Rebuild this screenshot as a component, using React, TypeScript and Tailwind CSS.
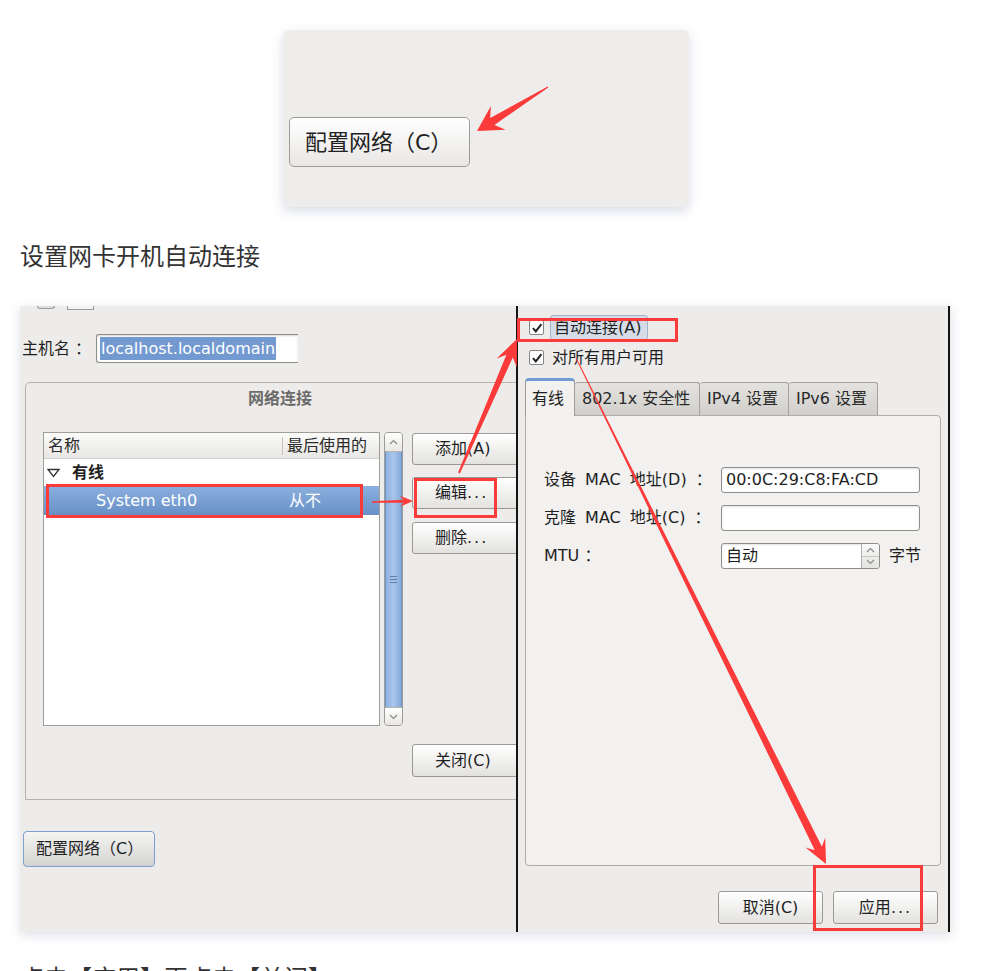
import React from "react";

const dlgFont = "font-['DejaVu_Sans','Noto_Sans_CJK_SC',sans-serif]";
const RED = "#fb3a3a";

// polygon for a snipaste-style arrow: thin tail, widening shaft, swept head
function arrow(x1: number, y1: number, x2: number, y2: number, tailW: number, shaftW: number, headLen: number, headW: number) {
  const dx = x2 - x1;
  const dy = y2 - y1;
  const len = Math.hypot(dx, dy);
  const ux = dx / len;
  const uy = dy / len;
  const nx = -uy;
  const ny = ux;
  const bx = x2 - ux * headLen;
  const by = y2 - uy * headLen;
  const jx = x2 - ux * headLen * 0.72;
  const jy = y2 - uy * headLen * 0.72;
  const pts = [
    [x1 + (nx * tailW) / 2, y1 + (ny * tailW) / 2],
    [jx + (nx * shaftW) / 2, jy + (ny * shaftW) / 2],
    [bx + (nx * headW) / 2, by + (ny * headW) / 2],
    [x2, y2],
    [bx - (nx * headW) / 2, by - (ny * headW) / 2],
    [jx - (nx * shaftW) / 2, jy - (ny * shaftW) / 2],
    [x1 - (nx * tailW) / 2, y1 - (ny * tailW) / 2],
  ];
  return pts.map((p) => p.map((v) => v.toFixed(1)).join(",")).join(" ");
}

function GtkButton({ children, className }: { children: React.ReactNode; className?: string }) {
  return (
    <div
      className={`flex items-center rounded-[3px] border border-[#9a9996] bg-linear-to-b from-[#ffffff] to-[#e3e2df] shadow-[inset_0_1px_0_#ffffff] ${className ?? ""}`}
    >
      {children}
    </div>
  );
}

function Dots() {
  return <span className="tracking-[2px]">...</span>;
}

function Check() {
  return (
    <div className="flex h-[15px] w-[15px] shrink-0 items-center justify-center rounded-[2px] border border-[#858481] bg-white">
      <svg width="12" height="12" viewBox="0 0 12 12">
        <path d="M2 6.2 L4.8 9.4 L10.4 2.2" fill="none" stroke="#222" strokeWidth="2" />
      </svg>
    </div>
  );
}

function Chevron({ up }: { up?: boolean }) {
  return (
    <svg width="9" height="6" viewBox="0 0 9 6">
      <path d={up ? "M1 5 L4.5 1.5 L8 5" : "M1 1 L4.5 4.5 L8 1"} fill="none" stroke="#8a8a8a" strokeWidth="1.2" />
    </svg>
  );
}

function LeftPanel() {
  return (
    <div className={`relative h-full w-[496px] shrink-0 overflow-hidden bg-[#edecea] ${dlgFont} text-[16px] text-[#1f1f1f]`}>
      {/* cut-off window controls */}
      <div className="flex h-[4px] items-start gap-[12px] pl-[17px]">
        <div className="h-[3px] w-[18px] rounded-b-[3px] border border-t-0 border-[#9a9a9a] bg-[#dedddb]" />
        <div className="h-[4px] w-[27px] border border-t-0 border-[#9a9a9a] bg-[#f3f3f2]" />
      </div>

      <div className="mt-[24px] flex h-[29px] items-center">
        <span className="w-[76px] pl-[2px]">主机名 ：</span>
        <div className="flex h-[29px] w-[202px] items-center rounded-l-[3px] border border-r-0 border-[#8e8d8a] bg-white pl-[3px] shadow-[inset_0_1px_2px_rgba(0,0,0,0.15)]">
          <span className="bg-[#7399d1] px-px leading-[23px] text-white">localhost.localdomain</span>
        </div>
      </div>

      {/* frame 网络连接 */}
      <div className="mt-[19px] ml-[5px] h-[418px] w-[510px] rounded-tl-[5px] border border-[#b3b2ae]">
        <div className="h-[49px] pt-[5px] text-center font-bold leading-[22px] text-[#6b6b6b]">网络连接</div>
        <div className="flex pl-[17px]">
          <div className="h-[294px] w-[337px] shrink-0 border border-[#9f9e9b] bg-white">
            <div className="flex h-[26px] items-center border-b border-[#cfcecb] bg-linear-to-b from-[#fbfbfa] to-[#e8e7e4] text-[#2a2a2a]">
              <span className="w-[238px] pl-[4px]">名称</span>
              <span className="h-[18px] w-px bg-[#c3c2be]" />
              <span className="pl-[4px]">最后使用的</span>
            </div>
            <div className="flex h-[27px] items-center pl-[3px]">
              <svg width="13" height="10" viewBox="0 0 13 10">
                <path d="M1 1.5 L12 1.5 L6.5 8.5 Z" fill="none" stroke="#333" strokeWidth="1.3" />
              </svg>
              <span className="ml-[12px] font-bold">有线</span>
            </div>
            <div className="flex h-[29px] items-center bg-linear-to-b from-[#8bb0df] to-[#6890c7] text-white">
              <span className="w-[238px] pl-[52px]">System eth0</span>
              <span className="pl-[7px]">从不</span>
            </div>
          </div>

          {/* scrollbar */}
          <div className="ml-[4px] flex h-[294px] w-[19px] shrink-0 flex-col overflow-hidden rounded-[4px] border border-[#9c9b98] bg-[#e2e1de]">
            <div className="flex h-[19px] items-center justify-center border-b border-[#b5b4b0] bg-linear-to-b from-white to-[#e8e7e4]">
              <Chevron up />
            </div>
            <div className="flex flex-1 items-center justify-center border-x border-[#7096c9] bg-linear-to-r from-[#8eb1df] via-[#a9c6eb] to-[#84a9da]">
              <div className="flex flex-col gap-[2px]">
                <div className="h-px w-[7px] bg-[#5f7fa8]" />
                <div className="h-px w-[7px] bg-[#5f7fa8]" />
                <div className="h-px w-[7px] bg-[#5f7fa8]" />
              </div>
            </div>
            <div className="flex h-[18px] items-center justify-center border-t border-[#b5b4b0] bg-linear-to-b from-white to-[#e8e7e4]">
              <Chevron />
            </div>
          </div>

          <div className="ml-[9px] flex w-[120px] shrink-0 flex-col pt-px">
            <GtkButton className="h-[32px] pl-[22px]">添加(A)</GtkButton>
            <GtkButton className="mt-[12px] h-[32px] pl-[22px]">
              编辑<Dots />
            </GtkButton>
            <GtkButton className="mt-[13px] h-[32px] pl-[22px]">
              删除<Dots />
            </GtkButton>
            <GtkButton className="mt-[190px] h-[33px] pl-[22px]">关闭(C)</GtkButton>
          </div>
        </div>
      </div>

      <div className="mt-[31px] ml-[3px] flex h-[36px] w-[132px] items-center rounded-[4px] border border-[#7d9fcb] bg-linear-to-b from-[#f5f5f4] to-[#d3d3d1] pl-[12px]">
        配置网络（C）
      </div>
    </div>
  );
}

function RightPanel() {
  return (
    <div className={`relative h-full w-[430px] shrink-0 bg-[#edecea] ${dlgFont} text-[16px] text-[#1f1f1f]`}>
      <div className="mt-[9px] flex h-[25px] items-center gap-[6px] pl-[11px]">
        <Check />
        <div className="flex h-[25px] w-[98px] items-center rounded-[3px] border border-[#a3b3c9] bg-[#d5dce7] pl-[3px]">自动连接(A)</div>
      </div>
      <div className="mt-[7px] flex h-[21px] items-center gap-[8px] pl-[11px]">
        <Check />
        <span>对所有用户可用</span>
      </div>

      <div className="mt-[10px] flex h-[37px] items-end pl-[7px]">
        <div className="relative z-10 -mb-px flex h-[38px] w-[50px] items-center rounded-t-[4px] border border-b-0 border-[#9e9d9a] border-t-[3px] border-t-[#709bd4] bg-[#f2f1f0] pl-[6px]">
          有线
        </div>
        <div className="flex h-[33px] w-[125px] items-center rounded-t-[3px] border border-b-0 border-l-0 border-[#a3a29e] bg-linear-to-b from-[#e4e3df] to-[#d1cfcb] pl-[7px] text-[#2a2a2a]">
          802.1x 安全性
        </div>
        <div className="flex h-[33px] w-[89px] items-center rounded-t-[3px] border border-b-0 border-l-0 border-[#a3a29e] bg-linear-to-b from-[#e4e3df] to-[#d1cfcb] pl-[7px] text-[#2a2a2a]">
          IPv4 设置
        </div>
        <div className="flex h-[33px] w-[89px] items-center rounded-t-[3px] border border-b-0 border-l-0 border-[#a3a29e] bg-linear-to-b from-[#e4e3df] to-[#d1cfcb] pl-[7px] text-[#2a2a2a]">
          IPv6 设置
        </div>
      </div>

      <div className="ml-[7px] h-[451px] w-[416px] rounded-b-[4px] rounded-tr-[4px] border border-[#aeada9] bg-[#f2f1f0] pt-[51px] pl-[18px]">
        <div className="flex flex-col gap-[12px]">
          <div className="flex h-[26px] items-center">
            <span className="w-[177px] [word-spacing:4px]">设备 MAC 地址(D) ：</span>
            <div className="flex h-[26px] w-[199px] items-center rounded-[3px] border border-[#8f8e8b] bg-white pl-[4px] shadow-[inset_0_1px_2px_rgba(0,0,0,0.12)]">
              00:0C:29:C8:FA:CD
            </div>
          </div>
          <div className="flex h-[26px] items-center">
            <span className="w-[177px] [word-spacing:4px]">克隆 MAC 地址(C) ：</span>
            <div className="h-[26px] w-[199px] rounded-[3px] border border-[#8f8e8b] bg-white shadow-[inset_0_1px_2px_rgba(0,0,0,0.12)]" />
          </div>
          <div className="flex h-[26px] items-center">
            <span className="w-[177px]">MTU ：</span>
            <div className="flex h-[26px] w-[159px] overflow-hidden rounded-[3px] border border-[#8f8e8b] bg-white shadow-[inset_0_1px_2px_rgba(0,0,0,0.12)]">
              <div className="flex flex-1 items-center pl-[4px]">自动</div>
              <div className="flex w-[18px] flex-col border-l border-[#b0afab] bg-linear-to-b from-[#fafafa] to-[#e4e3e0]">
                <div className="flex flex-1 items-center justify-center border-b border-[#c8c7c3]">
                  <Chevron up />
                </div>
                <div className="flex flex-1 items-center justify-center">
                  <Chevron />
                </div>
              </div>
            </div>
            <span className="ml-[9px]">字节</span>
          </div>
        </div>
      </div>

      <div className="mt-[25px] flex justify-end gap-[10px] pr-[10px]">
        <GtkButton className="h-[33px] w-[105px] justify-center">取消(C)</GtkButton>
        <GtkButton className="h-[33px] w-[105px] justify-center">
          应用<Dots />
        </GtkButton>
      </div>
    </div>
  );
}

export default function App() {
  return (
    <div className="bg-white px-5 pt-[30px] pb-10 font-['Noto_Sans_CJK_SC',sans-serif] text-[#333]">
      <div className="w-[932px]">
        {/* first screenshot */}
        <div className="relative mx-auto h-[177px] w-[406px] rounded-md bg-[#eeedeb] pt-[87px] pl-[6px] shadow-[0_4px_12px_rgba(130,140,175,0.3)]">
          <div
            className={`flex h-[50px] w-[181px] items-center rounded-[5px] border border-[#9d9c99] bg-linear-to-b from-white to-[#e8e7e5] pl-[15px] text-[22px] text-[#222] ${dlgFont}`}
          >
            配置网络（C）
          </div>
          <svg className="pointer-events-none absolute inset-0" width={406} height={177} viewBox="283 30 406 177">
            <polygon points={arrow(548, 87, 477, 131, 1, 8, 25, 28)} fill={RED} />
          </svg>
        </div>

        <p className="mt-[30px] text-[24px] leading-[36px]">设置网卡开机自动连接</p>

        {/* second screenshot */}
        <div className="relative mt-[33px] flex h-[626px] w-[931px] shadow-[0_3px_10px_rgba(120,130,165,0.25)]">
          <LeftPanel />
          <div className="w-[2px] shrink-0 bg-[#141414]" />
          <RightPanel />
          <div className="w-[2px] shrink-0 bg-[#141414]" />
          <div className="w-px shrink-0 bg-[#edecea]" />
          <svg className="pointer-events-none absolute inset-0" width={931} height={626} viewBox="20 306 931 626">
            <rect x={518.5} y={319.5} width={158} height={21} fill="none" stroke={RED} strokeWidth={3} />
            <rect x={47.5} y={485.5} width={314} height={31} fill="none" stroke={RED} strokeWidth={3} />
            <rect x={415.5} y={479.5} width={80} height={37} fill="none" stroke={RED} strokeWidth={3} />
            <rect x={814.5} y={866.5} width={107} height={63} fill="none" stroke={RED} strokeWidth={3} />
            <polygon points={arrow(372, 502, 413, 501, 1.5, 3, 13, 11)} fill={RED} />
            <polygon points={arrow(459, 473, 517, 339, 2, 7, 26, 22)} fill={RED} />
            <polygon points={arrow(576, 358, 826, 864, 1, 8, 24, 22)} fill={RED} />
          </svg>
        </div>

        <p className="mt-[27px] text-[24px] leading-[36px]">点击【应用】再点击【关闭】</p>
      </div>
    </div>
  );
}
